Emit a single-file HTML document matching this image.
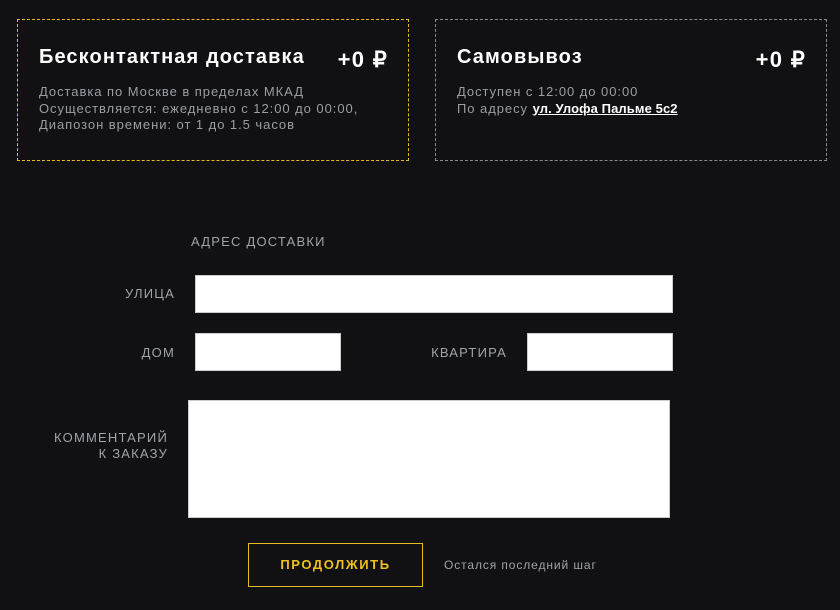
<!DOCTYPE html>
<html><head><meta charset="utf-8"><style>
body{margin:0;width:840px;height:610px;background:#111113;font-family:"Liberation Sans",sans-serif;position:relative;overflow:hidden;color:#fff}
.a{position:absolute}
.card{position:absolute;top:19px;width:392px;height:142px;border:1px dashed #8a8a8a;box-sizing:border-box}
.t{position:absolute;left:21px;top:26px;font-size:20px;font-weight:bold;letter-spacing:1.1px}
.p{position:absolute;right:20px;top:27px;font-size:22px;font-weight:bold;letter-spacing:1.3px}
.d{position:absolute;left:21px;top:64px;font-size:13px;line-height:16.5px;color:#9a9ea5;letter-spacing:0.95px}
.lbl{position:absolute;font-size:13px;color:#a0a4ab;letter-spacing:1.2px;text-align:right}
.in{position:absolute;background:#fff;border:1px solid #ccc;box-sizing:border-box}
</style></head><body>
<div class="card" style="left:17px;border-color:#e8b820">
<div class="t">Бесконтактная доставка</div><div class="p">+0 ₽</div>
<div class="d">Доставка по Москве в пределах МКАД<br>Осуществляется: ежедневно с 12:00 до 00:00,<br>Диапозон времени: от 1 до 1.5 часов</div>
</div>
<div class="card" style="left:435px">
<div class="t">Самовывоз</div><div class="p">+0 ₽</div>
<div class="d">Доступен с 12:00 до 00:00<br>По адресу <span style="color:#fff;text-decoration:underline;font-weight:bold;letter-spacing:0.1px">ул. Улофа Пальме 5с2</span></div>
</div>
<div class="lbl" style="left:191px;top:234px">АДРЕС ДОСТАВКИ</div>
<div class="lbl" style="left:90px;width:85px;top:286px">УЛИЦА</div>
<div class="in" style="left:195px;top:275px;width:478px;height:38px"></div>
<div class="lbl" style="left:90px;width:85px;top:345px">ДОМ</div>
<div class="in" style="left:195px;top:333px;width:146px;height:38px"></div>
<div class="lbl" style="left:390px;width:117px;top:345px">КВАРТИРА</div>
<div class="in" style="left:527px;top:333px;width:146px;height:38px"></div>
<div class="lbl" style="left:20px;width:148px;top:430px;line-height:16px">КОММЕНТАРИЙ<br>К ЗАКАЗУ</div>
<div class="in" style="left:188px;top:400px;width:482px;height:118px"></div>
<div class="a" style="left:248px;top:543px;width:175px;height:44px;border:1px solid #e8b820;box-sizing:border-box;color:#f0c020;font-weight:bold;font-size:13px;letter-spacing:1.6px;text-align:center;line-height:42px">ПРОДОЛЖИТЬ</div>
<div class="a" style="left:444px;top:558px;font-size:12px;color:#a0a4ab;letter-spacing:0.9px">Остался последний шаг</div>
</body></html>
